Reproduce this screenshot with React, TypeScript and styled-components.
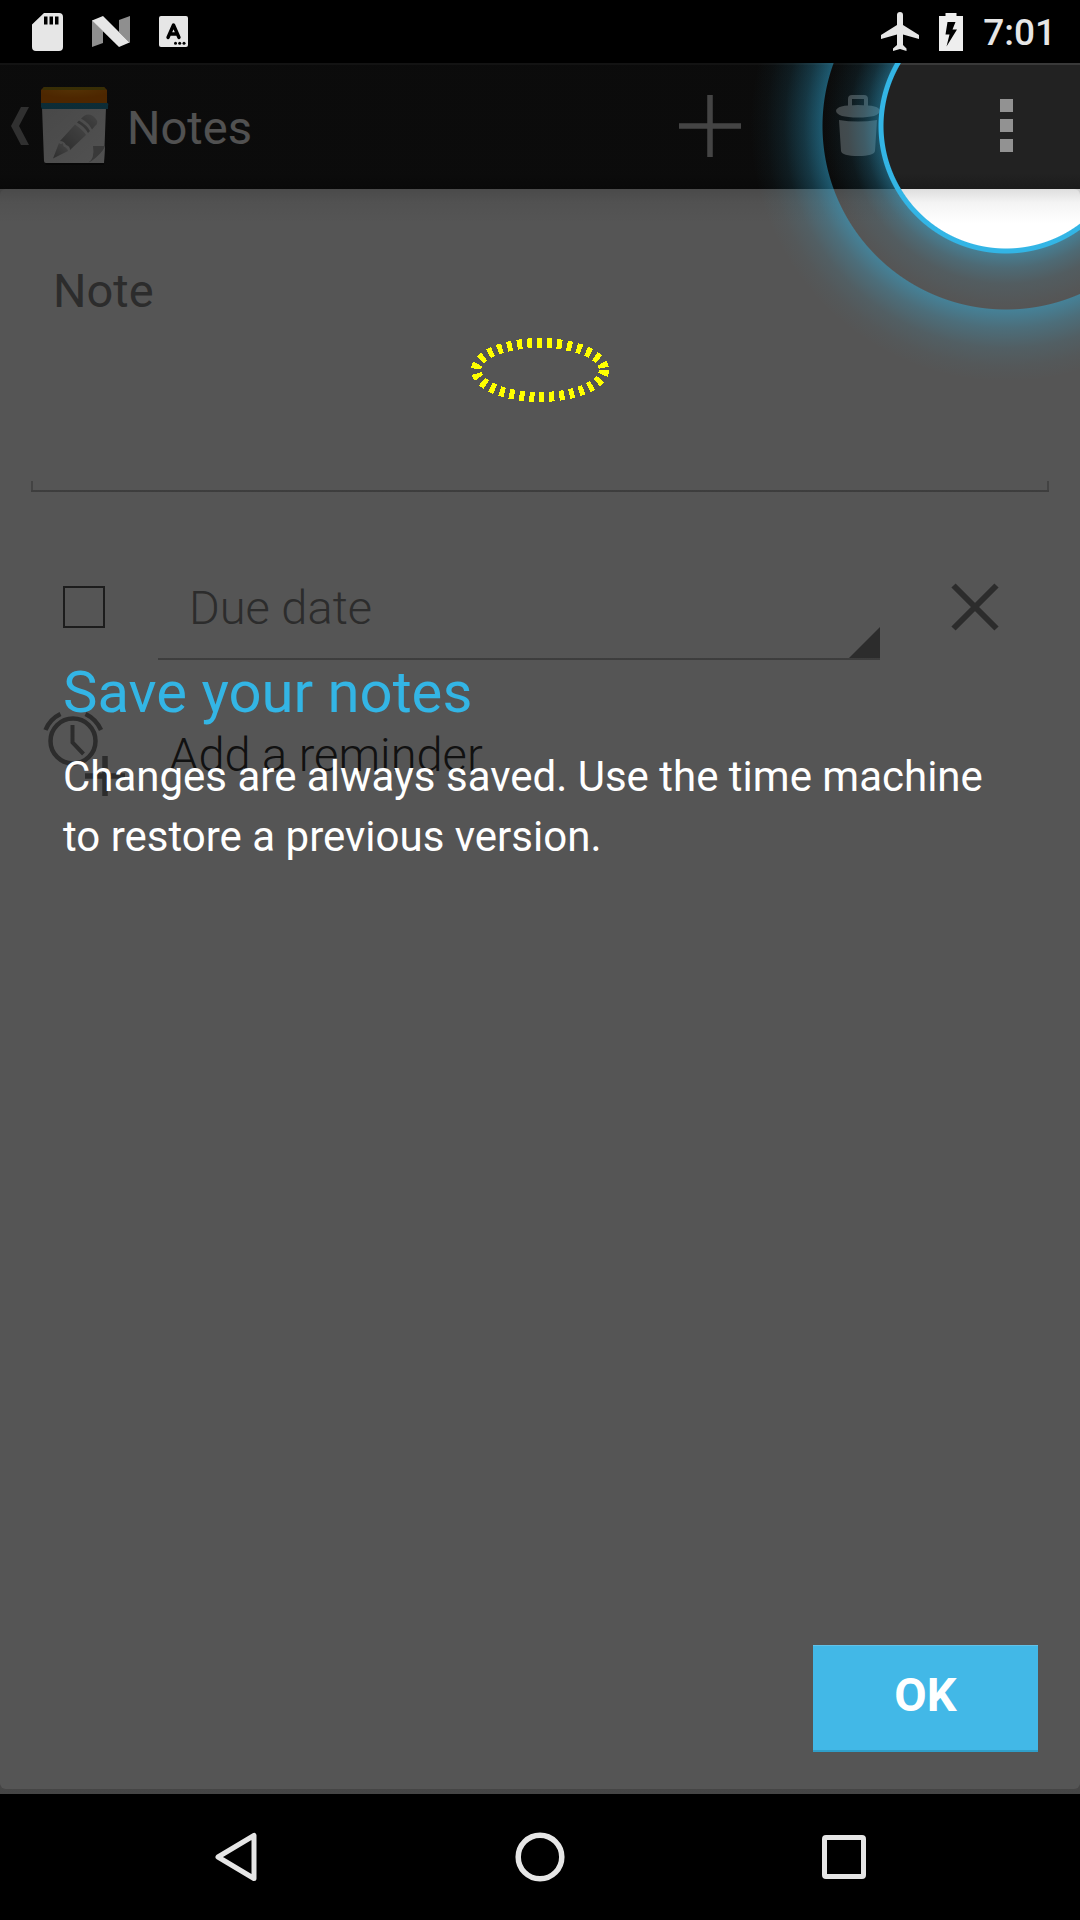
import React, { useState } from "react";
import styled, { createGlobalStyle } from "styled-components";

const GlobalStyle = createGlobalStyle`
  *, *::before, *::after { box-sizing: border-box; }
  html, body { margin: 0; padding: 0; background: #000; }
  body, button, textarea, select { font-family: Roboto, "Noto Sans", sans-serif; }
  button, textarea, select, input { margin: 0; padding: 0; border: 0; outline: 0; background: none; border-radius: 0; }
  svg { display: block; flex: none; }
`;

const Screen = styled.div`
  display: flex;
  flex-direction: column;
  min-height: 100vh;
  background: #000;
`;

const StatusBar = styled.header`
  display: flex;
  align-items: center;
  justify-content: space-between;
  height: 63px;
  padding: 0 24px 0 32px;
  color: #e6e6e6;
`;

const StatusGroup = styled.div<{ $gap: number }>`
  display: flex;
  align-items: center;
  gap: ${(p) => p.$gap}px;
`;

const Clock = styled.time`
  padding-top: 2px;
  font-size: 37px;
  line-height: 44px;
  font-weight: 500;
`;

const AppWindow = styled.div`
  position: relative;
  display: flex;
  flex: 1;
  flex-direction: column;
  background: #d0d0d0;
`;

const ActionBar = styled.nav`
  display: flex;
  align-items: center;
  height: 126px;
  padding-left: 11px;
  box-shadow: inset 0 2px #393939;
  background: linear-gradient(#222 88%, #1b1b1b);
`;

const UpLink = styled.a`
  display: flex;
  flex: 1;
  align-items: center;
  gap: 12px;
  color: #f3f3f3;
  text-decoration: none;
`;

const Title = styled.span`
  padding: 4px 0 0 6px;
  font-size: 47px;
  line-height: 56px;
`;

const ActionButton = styled.button`
  display: flex;
  align-items: center;
  justify-content: center;
  width: 148px;
  height: 126px;
`;

const Card = styled.main`
  flex: 1;
  margin-bottom: 5px;
  padding: 31px;
  border-radius: 6px;
  background: linear-gradient(#dedede, #f4f4f4 14px, #fff 34px);
`;

const NoteBox = styled.div`
  position: relative;
  height: 272px;
  border-bottom: 2px solid #b8b8b8;

  &::before, &::after {
    content: "";
    position: absolute;
    bottom: 0;
    width: 2px;
    height: 9px;
    background: #c8c8c8;
  }
  &::before { left: 0; }
  &::after { right: 0; }
`;

const NoteInput = styled.textarea`
  display: block;
  width: 100%;
  height: 100%;
  padding: 43px 22px;
  resize: none;
  font-size: 47px;
  line-height: 56px;
  &::placeholder { color: #848484; opacity: 1; }
`;

const DueRow = styled.div`
  display: flex;
  align-items: center;
  gap: 53px;
  height: 126px;
  margin: 52px 0 42px;
  padding: 0 32px;
`;

const DoneBox = styled.input`
  appearance: none;
  width: 42px;
  height: 42px;
  border: 2px solid #555;
  &:checked { background: #555; }
`;

const Picker = styled.div`
  position: relative;
  flex: 1;
  height: 106px;
  border-bottom: 2px solid #b8b8b8;
  &::after {
    content: "";
    position: absolute;
    right: 0;
    bottom: 0;
    width: 31px;
    height: 31px;
    background: #848484;
    clip-path: polygon(100% 0, 100% 100%, 0 100%);
    pointer-events: none;
  }
`;

const DueSelect = styled.select`
  appearance: none;
  width: 100%;
  height: 100%;
  padding: 2px 31px 0;
  font-size: 47px;
  font-weight: 300;
  color: #848484;
`;

const ClearButton = styled.button`
  display: flex;
  align-items: center;
  justify-content: center;
  width: 84px;
  height: 84px;
`;

const ReminderButton = styled.button`
  display: flex;
  align-items: center;
  gap: 42px;
  padding-left: 12px;
  font-size: 47px;
  line-height: 56px;
  font-weight: 300;
  color: #333;
`;

const Showcase = styled.section`
  position: absolute;
  inset: 0;
  display: flex;
  flex-direction: column;
  overflow: hidden;
  padding: 595px 42px 42px;
  background:
    radial-gradient(circle at calc(100% - 74px) 63px,
      transparent 122px, #33b5e5 123px, #33b5e5 127px,
      rgba(51, 181, 229, 0.42) 128px, rgba(51, 181, 229, 0.22) 142px,
      rgba(51, 181, 229, 0.08) 158px, rgba(51, 181, 229, 0.02) 176px,
      rgba(51, 181, 229, 0) 183px, rgba(51, 181, 229, 0.46) 184px,
      rgba(51, 181, 229, 0.26) 202px, rgba(51, 181, 229, 0.1) 222px,
      rgba(51, 181, 229, 0.03) 240px, rgba(51, 181, 229, 0) 256px),
    radial-gradient(circle at calc(100% - 74px) 63px,
      transparent 124px, rgba(0, 0, 0, 0.667) 125px);
`;

const TipTitle = styled.h2`
  margin: 0;
  padding: 0 21px;
  font-size: 58px;
  line-height: 68px;
  font-weight: 400;
  color: #33b5e5;
`;

const TipText = styled.p`
  margin: 0;
  padding: 21px;
  font-size: 42px;
  line-height: 60px;
  color: #fff;
`;

const OkButton = styled.button`
  align-self: flex-end;
  width: 225px;
  height: 107px;
  margin-top: auto;
  padding-bottom: 7px;
  border-top: 1px solid #62c2e8;
  border-bottom: 2px solid #2f9fca;
  background: #42b8e7;
  font-size: 47px;
  line-height: 56px;
  font-weight: 700;
  color: #fff;
`;

const TouchMark = styled.svg`
  position: absolute;
  top: 274px;
  left: 50%;
  margin-left: -70px;
  pointer-events: none;
`;

const SystemBar = styled.footer`
  display: flex;
  height: 126px;
  padding: 0 84px;
`;

const SystemButton = styled.button`
  display: flex;
  flex: 1;
  align-items: center;
  justify-content: center;
`;

const SdCardIcon = () => (
  <svg width="31" height="38" viewBox="0 0 31 38" fill="#e6e6e6">
    <path fillRule="evenodd" d="M12 0H27a4 4 0 0 1 4 4V34a4 4 0 0 1-4 4H4a4 4 0 0 1-4-4V11.500ZM12 3.500V11.500H15.500V3.500ZM17.500 3.500V11.500H21V3.500ZM23 3.500V11.500H26.500V3.500Z" />
  </svg>
);

const NougatIcon = () => (
  <svg width="38" height="31" viewBox="0 0 38 31">
    <path fill="#8f8f8f" d="M0 4 11 15V27L0 31ZM38 0V27L27 16V4Z" />
    <path fill="#e6e6e6" d="M0 4.500 11 0 37.500 26.500 27 31Z" />
  </svg>
);

const KeyboardIcon = () => (
  <svg width="29" height="31" viewBox="0 0 29 31">
    <rect width="29" height="31" rx="2" fill="#e6e6e6" />
    <path d="M9 21.500 14.500 9 20 21.500M10.500 18H18.500" fill="none" stroke="#000" strokeWidth="3.400" strokeLinecap="round" strokeLinejoin="round" />
    <g fill="#000"><circle cx="16.500" cy="27.300" r="1.500" /><circle cx="20.700" cy="27.300" r="1.500" /><circle cx="25" cy="27.300" r="1.500" /></g>
  </svg>
);

const PlaneIcon = () => (
  <svg width="38" height="39" viewBox="0 0 38 39" fill="#e6e6e6">
    <path d="M38 27V23L22 13V3a3 3 0 0 0-6 0V13L0 23V27L16 22.500V33L12 36.500V39L19 37 25.500 39V36.500L22 33V22.500Z" />
  </svg>
);

const BatteryIcon = () => (
  <svg width="24" height="38" viewBox="0 0 24 38">
    <path fill="#eee" d="M6.500 0H17.500V3H24V38H0V3H6.500Z" />
    <path fill="#000" d="M8.500 9H16.500L13.500 16.500H18L7.500 33.500 10.500 21.500H6.500Z" />
  </svg>
);

const ChevronIcon = () => (
  <svg width="18" height="38" viewBox="0 0 18 38">
    <path fill="#8f8f8f" d="M10 0H18L8 19 18 38H10L0 19Z" />
  </svg>
);

const NotepadIcon = () => (
  <svg width="68" height="78" viewBox="0 0 68 78">
    <defs>
      <radialGradient id="cover" cx="0.5" cy="0.1" r="0.6">
        <stop offset="0" stopColor="#fd970f" /><stop offset="1" stopColor="#e67300" />
      </radialGradient>
      <linearGradient id="sheet" x1="0" y1="0" x2="1" y2="1">
        <stop offset="0" stopColor="#d8d8d8" /><stop offset="1" stopColor="#f3f3f3" />
      </linearGradient>
      <linearGradient id="lead" x1="1" y1="0" x2="0" y2="1">
        <stop offset="0" stopColor="#ccc" /><stop offset="1" stopColor="#888" />
      </linearGradient>
    </defs>
    <path fill="#000" opacity="0.4" d="M3 74H63V78H5Z" />
    <path fill="url(#sheet)" d="M1 20H65L63 74Q63 76 61 76H5Q3 76 3 74Z" />
    <path fill="#2585a3" d="M0 16H66Q68 16 67 19V22H1L0 20Z" />
    <path fill="url(#cover)" d="M3 0H63L66 3V16H0V3Z" />
    <path fill="#a98a10" d="M3 0H63L65 3H1Z" />
    <g fill="url(#lead)">
      <path d="M12 71.500 18 56Q20 58 22 56Q22 60 24 60Q27 62 27 64Z" />
      <path d="M19 54 34 37.500Q43 44 45 48L29 63Q29 59 25 58Q23 54 19 54Z" />
      <path d="M36 35.500 38 33.500Q47 39 49 44L47 46Q44 40 36 35.500ZM40 31.500 43 29Q49 25 55 32Q58 36 54 39L51 42.500Q48 36 40 31.500Z" />
    </g>
    <path fill="#aaa" d="M47 76Q54 72 52 59H64L63 62Q55 72 47 76Z" />
    <path fill="#eee" d="M50 76Q60 70 64 59L63 76Z" />
  </svg>
);

const PlusIcon = () => (
  <svg width="62" height="62" viewBox="0 0 62 62"><path d="M31 0V62M0 31H62" stroke="#ccc" strokeWidth="5.500" /></svg>
);

const TrashIcon = () => (
  <svg width="44" height="62" viewBox="0 0 44 62">
    <path d="M14 12V4Q14 2 16 2H28Q30 2 30 4V12" fill="none" stroke="#c8c8c8" strokeWidth="4" />
    <path fill="#c8c8c8" d="M0 16Q0 10 22 10T44 16Q43 22.500 22 22.500T0 16ZM3 25Q22 28 41 25L39 56Q38 61 22 61T5 56Z" />
  </svg>
);

const OverflowIcon = () => (
  <svg width="13" height="54" viewBox="0 0 13 54" fill="#929292" shapeRendering="crispEdges">
    <path d="M0 0H13V13H0ZM0 20H13V33H0ZM0 40H13V53H0Z" />
  </svg>
);

const CrossIcon = () => (
  <svg width="48" height="48" viewBox="0 0 48 48"><path d="M2.500 2.500 45.500 45.500M45.500 2.500 2.500 45.500" stroke="#848484" strokeWidth="6" /></svg>
);

const AlarmAddIcon = () => (
  <svg width="84" height="86" viewBox="0 0 84 86" fill="none" stroke="#848484">
    <circle cx="30" cy="29" r="22.500" strokeWidth="4.500" />
    <path strokeWidth="4.500" d="M2.500 18Q7 7 17.500 2M42.500 2Q53 7 58 18" />
    <path strokeWidth="4" d="M29.500 13V30.500L40.500 42" />
    <path strokeWidth="5.500" d="M62 44V84M42 64H82" />
  </svg>
);

const BackIcon = () => (
  <svg width="50" height="50" viewBox="0 0 50 50">
    <path d="M43 3.500V46.500L7 25Z" fill="none" stroke="#e6e6e6" strokeWidth="5" strokeLinejoin="round" />
  </svg>
);

const HomeIcon = () => (
  <svg width="50" height="50" viewBox="0 0 50 50"><circle cx="25" cy="25" r="21.800" fill="none" stroke="#e6e6e6" strokeWidth="5.500" /></svg>
);

const RecentsIcon = () => (
  <svg width="44" height="44" viewBox="0 0 44 44"><rect x="2.500" y="2.500" width="39" height="39" rx="1.500" fill="none" stroke="#e6e6e6" strokeWidth="5" /></svg>
);

export default function App() {
  const [note, setNote] = useState("");
  const [done, setDone] = useState(false);

  return (
    <Screen>
      <GlobalStyle />
      <StatusBar>
        <StatusGroup $gap={29}>
          <SdCardIcon />
          <NougatIcon />
          <KeyboardIcon />
        </StatusGroup>
        <StatusGroup $gap={20}>
          <PlaneIcon />
          <BatteryIcon />
          <Clock>7:01</Clock>
        </StatusGroup>
      </StatusBar>

      <AppWindow>
        <ActionBar>
          <UpLink href="#notes">
            <ChevronIcon />
            <NotepadIcon />
            <Title>Notes</Title>
          </UpLink>
          <ActionButton aria-label="Add"><PlusIcon /></ActionButton>
          <ActionButton aria-label="Delete"><TrashIcon /></ActionButton>
          <ActionButton aria-label="More options"><OverflowIcon /></ActionButton>
        </ActionBar>

        <Card>
          <NoteBox>
            <NoteInput aria-label="Note" placeholder="Note" value={note} onChange={(e) => setNote(e.target.value)} />
          </NoteBox>
          <DueRow>
            <DoneBox type="checkbox" aria-label="Done" checked={done} onChange={(e) => setDone(e.target.checked)} />
            <Picker>
              <DueSelect aria-label="Due date"><option>Due date</option></DueSelect>
            </Picker>
            <ClearButton aria-label="Clear due date"><CrossIcon /></ClearButton>
          </DueRow>
          <ReminderButton>
            <AlarmAddIcon />
            Add a reminder
          </ReminderButton>
        </Card>

        <Showcase>
          <TipTitle>Save your notes</TipTitle>
          <TipText>Changes are always saved. Use the time machine to restore a previous version.</TipText>
          <OkButton>OK</OkButton>
        </Showcase>

        <TouchMark width="140" height="66" viewBox="0 0 140 66" shapeRendering="crispEdges">
          <ellipse cx="70" cy="33" rx="64" ry="27" fill="none" stroke="#ff0" strokeWidth="10" strokeDasharray="5 5" />
        </TouchMark>
      </AppWindow>

      <SystemBar>
        <SystemButton aria-label="Back"><BackIcon /></SystemButton>
        <SystemButton aria-label="Home"><HomeIcon /></SystemButton>
        <SystemButton aria-label="Recent apps"><RecentsIcon /></SystemButton>
      </SystemBar>
    </Screen>
  );
}
